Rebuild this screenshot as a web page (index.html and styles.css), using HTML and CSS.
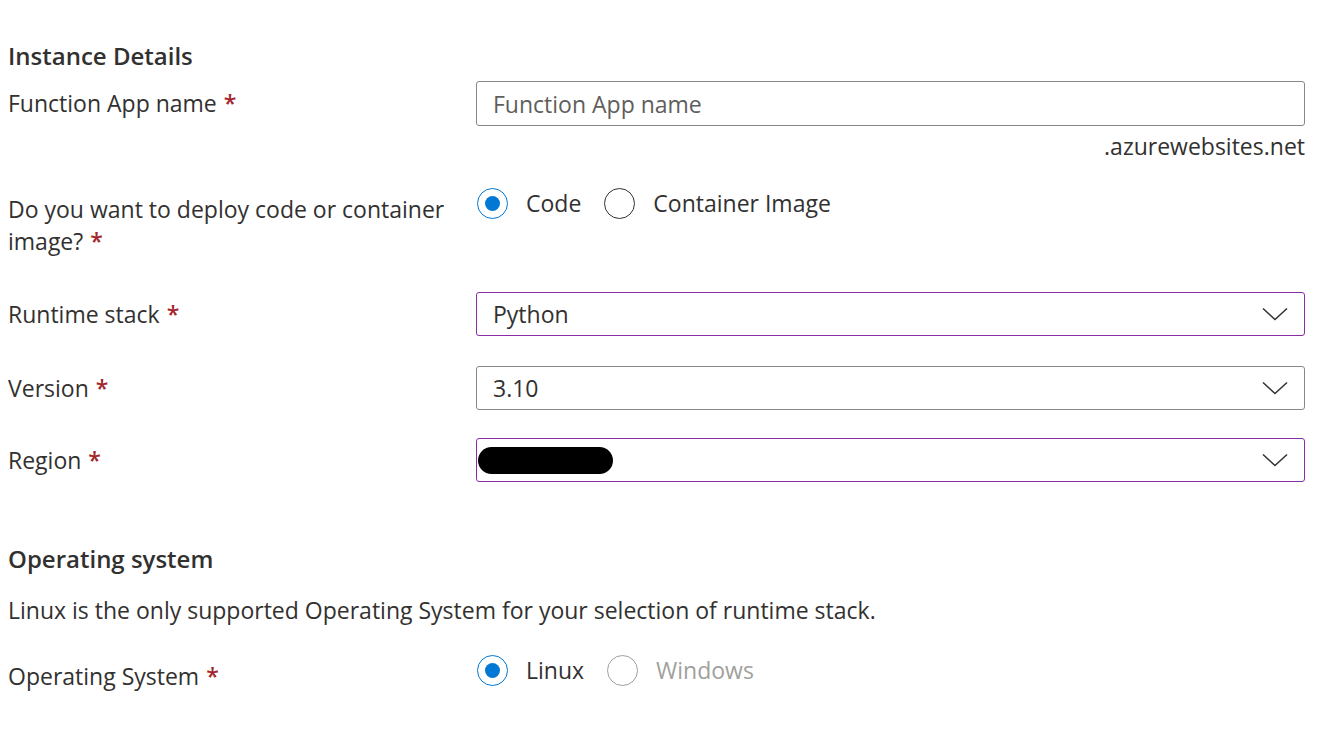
FILE: index.html
```html
<!DOCTYPE html>
<html lang="en">
<head>
<meta charset="utf-8">
<title>Instance Details</title>
<link rel="stylesheet" href="styles.css">
</head>
<body>
<div class="form">
  <h2 class="section-title">Instance Details</h2>

  <div class="row row-name">
    <div class="label">Function App name<span class="req">*</span></div>
    <div class="control">
      <div class="textbox"><span class="placeholder">Function App name</span></div>
      <div class="suffix">.azurewebsites.net</div>
    </div>
  </div>

  <div class="row row-deploy">
    <div class="label"><span class="line">Do you want to deploy code or container</span><span class="line">image?<span class="req">*</span></span></div>
    <div class="control radios">
      <div class="radio checked"><span class="circle"></span><span class="rtext">Code</span></div>
      <div class="radio"><span class="circle"></span><span class="rtext">Container Image</span></div>
    </div>
  </div>

  <div class="row row-runtime">
    <div class="label">Runtime stack<span class="req">*</span></div>
    <div class="control">
      <div class="select active"><span class="value">Python</span><svg class="chev" viewBox="0 0 26 14" width="26" height="14"><path d="M1 1.5 L13 12.5 L25 1.5" fill="none" stroke="#323130" stroke-width="1.5"/></svg></div>
    </div>
  </div>

  <div class="row row-version">
    <div class="label">Version<span class="req">*</span></div>
    <div class="control">
      <div class="select"><span class="value">3.10</span><svg class="chev" viewBox="0 0 26 14" width="26" height="14"><path d="M1 1.5 L13 12.5 L25 1.5" fill="none" stroke="#323130" stroke-width="1.5"/></svg></div>
    </div>
  </div>

  <div class="row row-region">
    <div class="label">Region<span class="req">*</span></div>
    <div class="control">
      <div class="select active region"><span class="redact"></span><svg class="chev" viewBox="0 0 26 14" width="26" height="14"><path d="M1 1.5 L13 12.5 L25 1.5" fill="none" stroke="#323130" stroke-width="1.5"/></svg></div>
    </div>
  </div>

  <h2 class="section-title os-title">Operating system</h2>
  <p class="desc">Linux is the only supported Operating System for your selection of runtime stack.</p>

  <div class="row row-os">
    <div class="label">Operating System<span class="req">*</span></div>
    <div class="control radios">
      <div class="radio checked"><span class="circle"></span><span class="rtext">Linux</span></div>
      <div class="radio disabled"><span class="circle"></span><span class="rtext">Windows</span></div>
    </div>
  </div>
</div>
</body>
</html>
```

FILE: styles.css
```css
* { box-sizing: border-box; }
html, body { margin: 0; padding: 0; background: #ffffff; }
body {
  font-family: "Open Sans", "Noto Sans", sans-serif;
  font-size: 23px;
  color: #323130;
}
.form {
  width: 1305px;
  padding-left: 8px;
  padding-top: 40px;
}
.section-title {
  margin: 0;
  font-size: 24px;
  font-weight: 600;
  line-height: 32px;
  color: #323130;
}
.row {
  display: flex;
  align-items: flex-start;
}
.label {
  width: 468px;
  flex: none;
  line-height: 32px;
  padding-right: 12px;
}
.line { display: block; white-space: nowrap; }
.req { color: #a4262c; font-weight: 600; margin-left: 7px; }
.control { flex: 1; min-width: 0; }

.row-name { margin-top: 9px; }
.row-name .label { padding-top: 6px; }
.textbox {
  height: 45px;
  border: 1px solid #8a8886;
  border-radius: 3px;
  padding: 0 16px;
  display: flex;
  align-items: center;
}
.placeholder { color: #605e5c; }
.suffix {
  margin-top: 5px;
  text-align: right;
  line-height: 30px;
}

.row-deploy { margin-top: 27px; }
.row-deploy .label { padding-top: 5px; }
.radios { display: flex; align-items: center; gap: 22px; }
.radio { display: flex; align-items: center; height: 30px; }
.circle {
  width: 31px;
  height: 31px;
  border-radius: 50%;
  border: 1px solid #323130;
  margin-right: 18px;
  margin-left: 1px;
  flex: none;
  position: relative;
}
.radio.checked .circle { border-color: #0078d4; }
.radio.checked .circle::after {
  content: "";
  position: absolute;
  left: 7px; top: 7px;
  width: 15px; height: 15px;
  border-radius: 50%;
  background: #0078d4;
}
.radio.disabled .circle { border-color: #a19f9d; }
.radio.disabled .rtext { color: #a19f9d; }

.select {
  height: 44px;
  border: 1px solid #8a8886;
  border-radius: 3px;
  padding: 0 16px 0 16px;
  display: flex;
  align-items: center;
  justify-content: space-between;
}
.select.active { border-color: #8a2da5; }
.chev { flex: none; }
.row-runtime { margin-top: 35px; }
.row-version { margin-top: 30px; }
.row-region { margin-top: 28px; }
.row-runtime .label, .row-version .label, .row-region .label { padding-top: 6px; }
.select.region { padding-left: 1px; }
.redact {
  display: block;
  width: 135px;
  height: 27px;
  border-radius: 14px;
  background: #000000;
}

.os-title { margin-top: 61px; }
.desc {
  margin: 20px 0 0 0;
  line-height: 30px;
}
.row-os { margin-top: 30px; }
.row-os .label { padding-top: 5px; }
```
